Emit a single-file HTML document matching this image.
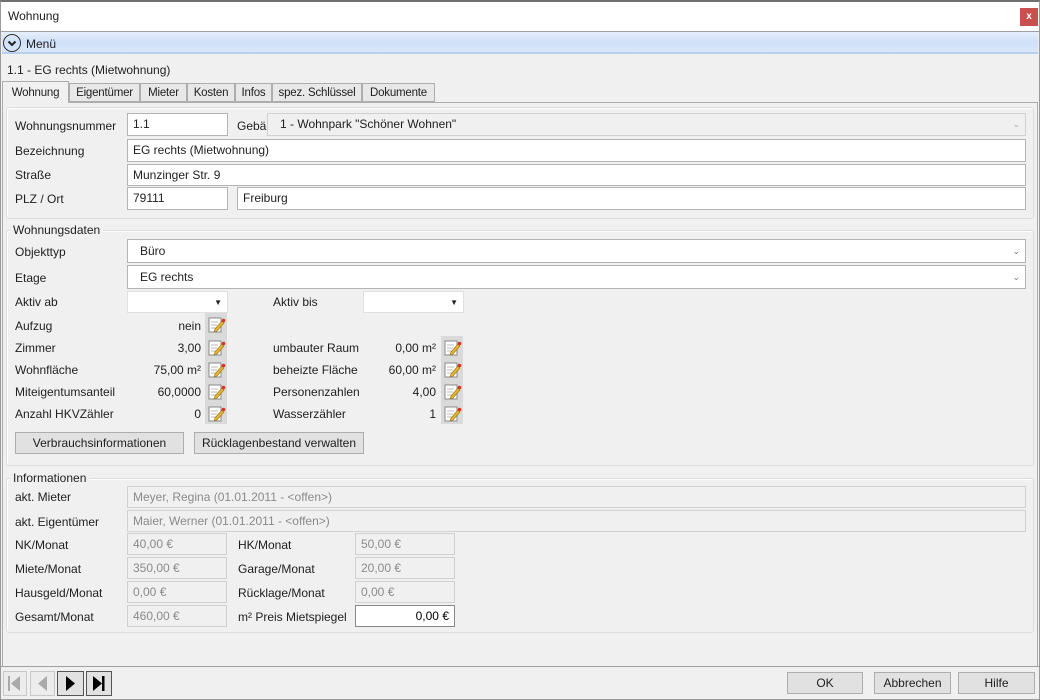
<!DOCTYPE html>
<html><head><meta charset="utf-8"><style>
*{box-sizing:border-box;margin:0;padding:0}
body{width:1040px;height:700px;background:#f0f0f0;font-family:"Liberation Sans",sans-serif;font-size:12px;color:#1e1e1e;position:relative;overflow:hidden}
.a{position:absolute}
.t{position:absolute;white-space:nowrap;line-height:14px}
.in{position:absolute;background:#fff;border:1px solid #b4b4b4;padding:0 5px;line-height:21px;white-space:nowrap}
.dis{background:#f0f0f0;border-color:#d0d0d0;color:#8a8a8a}
.tab{position:absolute;top:83px;height:19px;border:1px solid #adadad;background:#e8e8e8;text-align:center;line-height:18px;font-size:11.5px;letter-spacing:-0.2px;white-space:nowrap;overflow:hidden}
.grp{position:absolute;border:1px solid #dcdcdc;border-radius:3px;box-shadow:inset 1px 1px 0 #fff}
.leg{position:absolute;background:#f0f0f0;padding:0 3px;line-height:14px}
.btn{position:absolute;background:#e1e1e1;border:1px solid #adadad;text-align:center;line-height:20px}
.ic{position:absolute;width:22px;background:#dadada}
.r{text-align:right}
.chev{position:absolute;right:5px;top:0;font-size:9px;color:#777}
</style></head><body>
<div class="a" style="left:0;top:0;width:1040px;height:700px;border:1px solid #9a9a9a;border-top:2px solid #707070"></div>
<div class="a" style="left:1px;top:2px;width:1038px;height:29px;background:#fff"></div>
<div class="t" style="left:8px;top:9px">Wohnung</div>
<div class="a" style="left:1020px;top:8px;width:18px;height:18px;background:#c9504f;color:#fff;font-size:10px;font-weight:bold;text-align:center;line-height:17px">x</div>
<div class="a" style="left:1px;top:31px;width:1038px;height:1px;background:#a0a0a0"></div>
<div class="a" style="left:2px;top:32px;width:1036px;height:22px;background:linear-gradient(#e6effc,#cfe0f7 45%,#dbe8fb);box-shadow:inset 0 -2px 0 #b8d0f0"></div>
<div class="a" style="left:3px;top:34px;width:18px;height:18px;border:1.5px solid #333;border-radius:50%"></div>
<svg class="a" style="left:3px;top:34px" width="18" height="18"><path d="M5.5 7.5 L9 11 L12.5 7.5" stroke="#222" stroke-width="2" fill="none"/></svg>
<div class="t" style="left:26px;top:37px">Menü</div>
<div class="t" style="left:7px;top:63px">1.1 - EG rechts (Mietwohnung)</div>
<div class="a" style="left:2px;top:102px;width:1036px;height:564px;border-top:1px solid #adadad;border-right:1px solid #adadad;border-left:1px solid #adadad"></div>
<div class="tab" style="left:2px;top:81px;height:22px;width:67px;background:#f0f0f0;border-bottom:none;line-height:22px">Wohnung</div>
<div class="tab" style="left:69px;width:71px">Eigentümer</div>
<div class="tab" style="left:140px;width:47px">Mieter</div>
<div class="tab" style="left:187px;width:48px">Kosten</div>
<div class="tab" style="left:235px;width:37px">Infos</div>
<div class="tab" style="left:272px;width:90px">spez. Schlüssel</div>
<div class="tab" style="left:362px;width:73px">Dokumente</div>

<div class="grp" style="left:6px;top:107px;width:1028px;height:112px"></div>
<div class="t" style="left:15px;top:119px">Wohnungsnummer</div>
<div class="in" style="left:127px;top:113px;width:101px;height:23px">1.1</div>
<div class="t" style="left:237px;top:119px">Gebäude</div>
<div class="in dis" style="left:267px;top:113px;width:759px;height:23px;color:#1e1e1e;padding-left:12px">1 - Wohnpark "Schöner Wohnen"<span class="chev" style="color:#aaa">&#8964;</span></div>
<div class="t" style="left:15px;top:144px">Bezeichnung</div>
<div class="in" style="left:127px;top:139px;width:899px;height:23px">EG rechts (Mietwohnung)</div>
<div class="t" style="left:15px;top:168px">Straße</div>
<div class="in" style="left:127px;top:164px;width:899px;height:22px;line-height:20px">Munzinger Str. 9</div>
<div class="t" style="left:15px;top:192px">PLZ / Ort</div>
<div class="in" style="left:127px;top:187px;width:101px;height:23px">79111</div>
<div class="in" style="left:237px;top:187px;width:789px;height:23px">Freiburg</div>

<div class="grp" style="left:6px;top:230px;width:1028px;height:236px"></div>
<div class="leg" style="left:10px;top:223px">Wohnungsdaten</div>
<div class="t" style="left:15px;top:245px">Objekttyp</div>
<div class="in" style="left:127px;top:239px;width:899px;height:24px;padding-left:12px;line-height:23px">Büro<span class="chev">&#8964;</span></div>
<div class="t" style="left:15px;top:271px">Etage</div>
<div class="in" style="left:127px;top:265px;width:899px;height:24px;padding-left:12px;line-height:23px">EG rechts<span class="chev">&#8964;</span></div>
<div class="t" style="left:15px;top:295px">Aktiv ab</div>
<div class="in" style="left:127px;top:291px;width:101px;height:22px;border-color:#e0e0e0"><span class="chev" style="font-size:8px;color:#222">&#9660;</span></div>
<div class="t" style="left:273px;top:295px">Aktiv bis</div>
<div class="in" style="left:363px;top:291px;width:101px;height:22px;border-color:#e0e0e0"><span class="chev" style="font-size:8px;color:#222">&#9660;</span></div>

<div class="ic" style="left:205px;top:313px;height:111px"></div>
<div class="ic" style="left:441px;top:336px;height:88px"></div>
<svg class="a" style="left:0;top:0" width="1040" height="700">
<defs><g id="e"><rect x="1" y="2" width="12" height="14" fill="#fff" stroke="#888"/><path d="M3 6h7M3 9h6M3 12h5" stroke="#bbb"/><path d="M7 13 L14 5 L16 7 L9 15 L6 16Z" fill="#e8b530" stroke="#9a7010" stroke-width=".6"/><circle cx="15.5" cy="4.5" r="1.8" fill="#e03020"/></g></defs>
<use href="#e" x="208" y="316"/><use href="#e" x="208" y="339"/><use href="#e" x="208" y="361"/><use href="#e" x="208" y="383"/><use href="#e" x="208" y="405"/>
<use href="#e" x="444" y="339"/><use href="#e" x="444" y="361"/><use href="#e" x="444" y="383"/><use href="#e" x="444" y="405"/>
</svg>
<div class="t" style="left:15px;top:319px">Aufzug</div><div class="t r" style="left:120px;top:319px;width:81px">nein</div>
<div class="t" style="left:15px;top:341px">Zimmer</div><div class="t r" style="left:120px;top:341px;width:81px">3,00</div>
<div class="t" style="left:15px;top:363px">Wohnfläche</div><div class="t r" style="left:120px;top:363px;width:81px">75,00 m²</div>
<div class="t" style="left:15px;top:385px">Miteigentumsanteil</div><div class="t r" style="left:120px;top:385px;width:81px">60,0000</div>
<div class="t" style="left:15px;top:407px">Anzahl HKVZähler</div><div class="t r" style="left:120px;top:407px;width:81px">0</div>
<div class="t" style="left:273px;top:341px">umbauter Raum</div><div class="t r" style="left:356px;top:341px;width:80px">0,00 m²</div>
<div class="t" style="left:273px;top:363px">beheizte Fläche</div><div class="t r" style="left:356px;top:363px;width:80px">60,00 m²</div>
<div class="t" style="left:273px;top:385px">Personenzahlen</div><div class="t r" style="left:356px;top:385px;width:80px">4,00</div>
<div class="t" style="left:273px;top:407px">Wasserzähler</div><div class="t r" style="left:356px;top:407px;width:80px">1</div>
<div class="btn" style="left:15px;top:432px;width:169px;height:22px">Verbrauchsinformationen</div>
<div class="btn" style="left:194px;top:432px;width:170px;height:22px">Rücklagenbestand verwalten</div>

<div class="grp" style="left:6px;top:478px;width:1028px;height:155px"></div>
<div class="leg" style="left:10px;top:471px">Informationen</div>
<div class="t" style="left:15px;top:490px">akt. Mieter</div>
<div class="in dis" style="left:127px;top:486px;width:899px;height:22px;line-height:20px">Meyer, Regina (01.01.2011 - &lt;offen&gt;)</div>
<div class="t" style="left:15px;top:515px">akt. Eigentümer</div>
<div class="in dis" style="left:127px;top:510px;width:899px;height:22px;line-height:20px">Maier, Werner (01.01.2011 - &lt;offen&gt;)</div>
<div class="t" style="left:15px;top:538px">NK/Monat</div><div class="in dis" style="left:127px;top:533px;width:100px;height:22px;line-height:20px">40,00 €</div>
<div class="t" style="left:238px;top:538px">HK/Monat</div><div class="in dis" style="left:355px;top:533px;width:100px;height:22px;line-height:20px">50,00 €</div>
<div class="t" style="left:15px;top:562px">Miete/Monat</div><div class="in dis" style="left:127px;top:557px;width:100px;height:22px;line-height:20px">350,00 €</div>
<div class="t" style="left:238px;top:562px">Garage/Monat</div><div class="in dis" style="left:355px;top:557px;width:100px;height:22px;line-height:20px">20,00 €</div>
<div class="t" style="left:15px;top:586px">Hausgeld/Monat</div><div class="in dis" style="left:127px;top:581px;width:100px;height:22px;line-height:20px">0,00 €</div>
<div class="t" style="left:238px;top:586px">Rücklage/Monat</div><div class="in dis" style="left:355px;top:581px;width:100px;height:22px;line-height:20px">0,00 €</div>
<div class="t" style="left:15px;top:610px">Gesamt/Monat</div><div class="in dis" style="left:127px;top:605px;width:100px;height:22px;line-height:20px">460,00 €</div>
<div class="t" style="left:238px;top:610px">m² Preis Mietspiegel</div><div class="in r" style="left:355px;top:605px;width:100px;height:22px;line-height:20px;border-color:#888;color:#000">0,00 €</div>

<div class="a" style="left:1px;top:666px;width:1038px;height:1px;background:#a0a0a0"></div>
<svg class="a" style="left:0;top:668px" width="120" height="30">
<rect x="3.5" y="3.5" width="23" height="24" fill="#ececec" stroke="#c8c8c8"/><rect x="8" y="8" width="2" height="15" fill="#aaa"/><path d="M20 8 L11 15.5 L20 23Z" fill="#aaa"/>
<rect x="30.5" y="3.5" width="24" height="24" fill="#ececec" stroke="#c8c8c8"/><path d="M47 8 L38 15.5 L47 23Z" fill="#aaa"/>
<rect x="57.5" y="3.5" width="26" height="24" fill="#e1e1e1" stroke="#555"/><path d="M66 8 L75 15.5 L66 23Z" fill="#000"/>
<rect x="86.5" y="3.5" width="25" height="24" fill="#e1e1e1" stroke="#555"/><path d="M93 8 L102 15.5 L93 23Z" fill="#000"/><rect x="102" y="8" width="2.5" height="15" fill="#000"/>
</svg>
<div class="btn" style="left:787px;top:672px;width:76px;height:22px">OK</div>
<div class="btn" style="left:874px;top:672px;width:77px;height:22px">Abbrechen</div>
<div class="btn" style="left:958px;top:672px;width:77px;height:22px">Hilfe</div>
</body></html>
